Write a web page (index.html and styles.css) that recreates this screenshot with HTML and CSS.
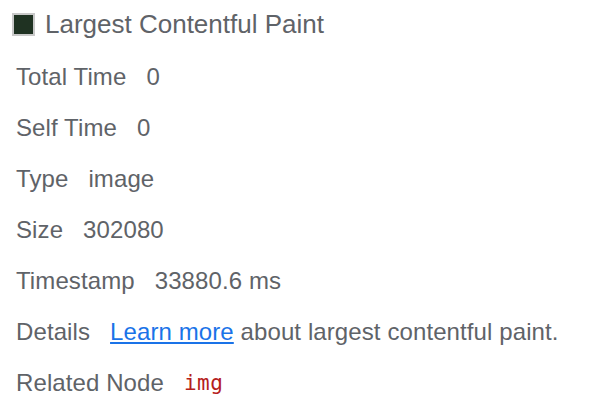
FILE: index.html
```html
<!DOCTYPE html>
<html>
<head>
<meta charset="utf-8">
<link rel="stylesheet" href="styles.css">
</head>
<body>
<div class="details">
  <div class="title-row">
    <span class="swatch"></span>
    <span class="title">Largest Contentful Paint</span>
  </div>
  <div class="row"><span class="label">Total Time</span><span class="value">0</span></div>
  <div class="row"><span class="label">Self Time</span><span class="value">0</span></div>
  <div class="row"><span class="label">Type</span><span class="value">image</span></div>
  <div class="row"><span class="label">Size</span><span class="value">302080</span></div>
  <div class="row"><span class="label">Timestamp</span><span class="value">33880.6 ms</span></div>
  <div class="row"><span class="label">Details</span><span class="value"><a class="link" href="#">Learn more</a> about largest contentful paint.</span></div>
  <div class="row"><span class="label">Related Node</span><span class="value node">img</span></div>
</div>
</body>
</html>
```
FILE: styles.css
```css
html, body {
  margin: 0;
  padding: 0;
  background: #ffffff;
}
.details {
  font-family: "Liberation Sans", Arial, sans-serif;
  color: #5f6368;
  display: flex;
  flex-direction: column;
}
.title-row {
  height: 51px;
  display: flex;
  align-items: center;
  padding-left: 12px;
  padding-bottom: 3px;
  box-sizing: border-box;
}
.swatch {
  width: 19px;
  height: 19px;
  border: 2px solid #c9c9c9;
  background: #1f3222;
  margin-right: 10px;
  flex: none;
}
.title {
  font-size: 26px;
  line-height: 30px;
}
.row {
  height: 51px;
  display: flex;
  align-items: center;
  padding-left: 16px;
  font-size: 24px;
  letter-spacing: 0.1px;
  white-space: nowrap;
}
.label {
  margin-right: 20px;
}
.link {
  color: #1a73e8;
  text-decoration: underline;
}
.node {
  font-family: "DejaVu Sans Mono", "Liberation Mono", monospace;
  font-size: 21px;
  letter-spacing: 0.5px;
  color: #b5201c;
}
```
